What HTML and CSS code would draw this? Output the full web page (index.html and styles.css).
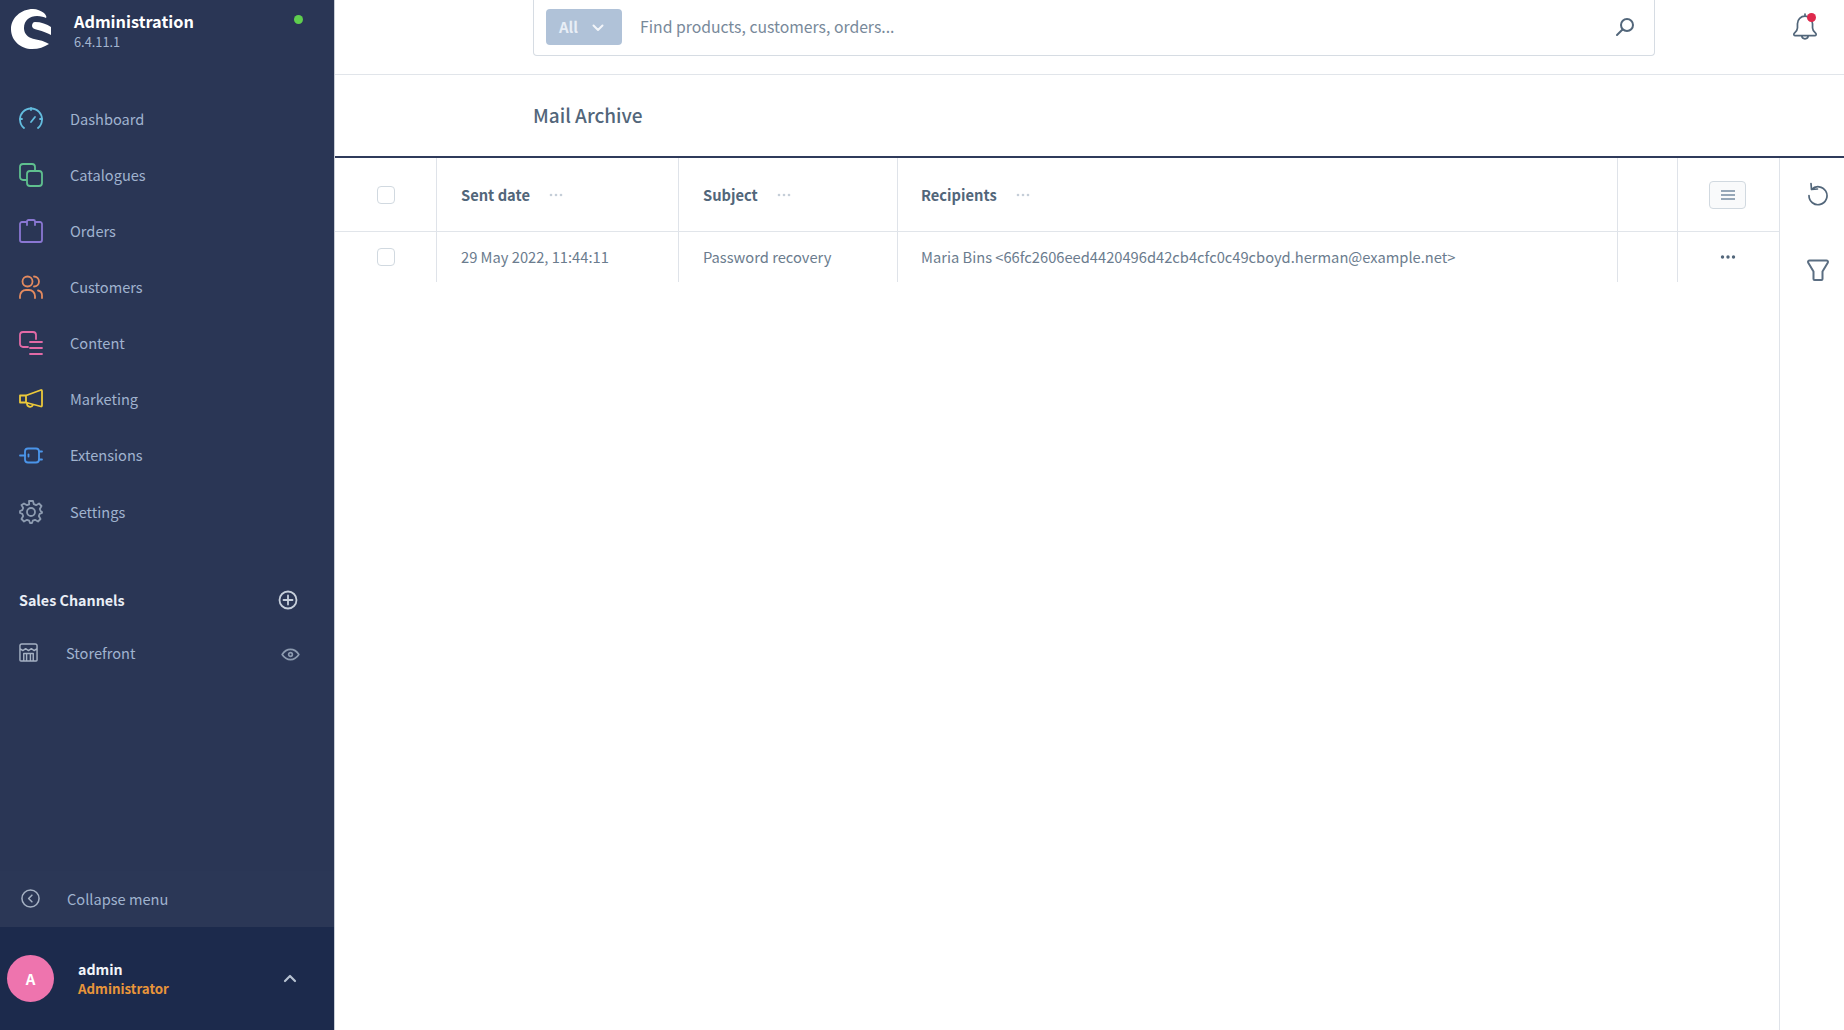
FILE: index.html
```html
<!DOCTYPE html>
<html lang="en">
<head>
<meta charset="utf-8">
<title>Mail Archive</title>
<link rel="stylesheet" href="styles.css">
</head>
<body>
<aside class="sidebar">
  <header class="brand">
    <svg class="logo" viewBox="0 0 41 41"><path fill="#fff" d="M22 0C10 0 0 9 0 20c0 12 10 20 21 20 7 0 12-2 17-5C32 31 25 31 20 29 15 27 13 23 13 19 13 11 19 7 26 7c4 0 7 1 9 2 1-1 0-3-2-5C30 2 26 0 22 0Z"/><path fill="#fff" d="M24 13c6 0 12 2 16 5v8c-4-2-8-4-13-5-4-1-6-2-6-4 0-2 1-4 3-4Z"/></svg>
    <div class="brand-text">
      <div class="brand-name">Administration</div>
      <div class="brand-version">6.4.11.1</div>
    </div>
    <span class="status-dot"></span>
  </header>
  <nav class="nav">
    <a class="nav-item"><svg class="nav-icon ic-blue" viewBox="0 0 24 24"><path d="M5 21A11 11 0 1 1 19 21"/><path d="M12 1v2M1 12h2M21 12h2M12 15l4-5"/></svg>Dashboard</a>
    <a class="nav-item"><svg class="nav-icon ic-green" viewBox="0 0 24 24"><path d="M7 17H4a3 3 0 0 1-3-3V4a3 3 0 0 1 3-3h9a3 3 0 0 1 3 3v3"/><rect x="8" y="8" width="15" height="15" rx="3"/></svg>Catalogues</a>
    <a class="nav-item"><svg class="nav-icon ic-purple" viewBox="0 0 24 24"><path d="M8 3H3a2 2 0 0 0-2 2v16a2 2 0 0 0 2 2h18a2 2 0 0 0 2-2V5a2 2 0 0 0-2-2h-5M8 6V2.500A1.500 1.500 0 0 1 9.500 1h5A1.500 1.500 0 0 1 16 2.500V6"/></svg>Orders</a>
    <a class="nav-item"><svg class="nav-icon ic-orange" viewBox="0 0 24 24"><circle cx="8.5" cy="6.5" r="5"/><path d="M1 23v-2a6 6 0 0 1 6-6h3a6 6 0 0 1 6 6v2M15 1.5a5 5 0 0 1 0 10M19 15.500a5 5 0 0 1 4 5V23"/></svg>Customers</a>
    <a class="nav-item"><svg class="nav-icon ic-pink" viewBox="0 0 24 24"><path d="M9 16H4a3 3 0 0 1-3-3V4a3 3 0 0 1 3-3h10a3 3 0 0 1 3 3v4M11 11h12M11 17h12M11 23h12"/></svg>Content</a>
    <a class="nav-item"><svg class="nav-icon ic-yellow" viewBox="0 0 24 24"><path d="M1 8.500h6l15-5.500a1 1 0 0 1 1 1v14.500a1 1 0 0 1-1 1L7 15.500H1ZM7 8.500v7M8 16a3.500 3.500 0 0 0 3 3.800 3 3 0 0 0 3-2"/></svg>Marketing</a>
    <a class="nav-item"><svg class="nav-icon ic-sky" viewBox="0 0 24 24"><rect x="6" y="5.500" width="14" height="14" rx="3"/><path d="M1 12.500h5M20 8.500h3M20 16.500h3"/><path d="M9.500 11.500v2"/></svg>Extensions</a>
    <a class="nav-item"><svg class="nav-icon ic-grey" viewBox="0 0 24 24"><circle cx="12" cy="12" r="4"/><path d="M10 1h4l.8 3.200 2.300 1 2.900-1.700L22.500 6l-1.700 3 .9 2.200L23 12v1l-2.300.8-.9 2.200 1.700 3-2.500 2.500-3-1.700-2.200.9L13 23h-2l-.8-2.300-2.200-.9-3 1.700L2.500 19l1.700-3-.9-2.200L1 13v-2l2.300-.8.9-2.200-1.700-3L5 3.500l3 1.700 2.200-.9Z"/></svg>Settings</a>
  </nav>
  <section class="channels">
    <div class="channels-head">
      <span>Sales Channels</span>
      <svg class="channels-add" viewBox="0 0 20 20"><circle cx="10" cy="10" r="8.5"/><path d="M10 5.500v9M5.500 10h9"/></svg>
    </div>
    <a class="channel">
      <svg class="channel-icon" viewBox="0 0 20 20"><path d="M3 1h14a2 2 0 0 1 2 2v15a1 1 0 0 1-1 1H2a1 1 0 0 1-1-1V3a2 2 0 0 1 2-2ZM1 6l3 2 3-2 3 2 3-2 3 2 3-2M5 19v-8h10v8M8 11v8M12 11v8"/></svg>
      <span class="channel-name">Storefront</span>
      <svg class="channel-eye" viewBox="0 0 20 14"><path d="M1 7c2.500-3.800 5.500-5.500 9-5.500S16.500 3.200 19 7c-2.500 3.800-5.500 5.500-9 5.500S3.500 10.800 1 7Z"/><circle cx="10" cy="7" r="2"/></svg>
    </a>
  </section>
  <a class="collapse">
    <svg class="collapse-icon" viewBox="0 0 20 20"><circle cx="10" cy="10" r="9"/><path d="M11.500 6.500 8 10l3.500 3.500"/></svg>
    Collapse menu
  </a>
  <footer class="user">
    <span class="avatar">A</span>
    <div class="user-text">
      <div class="user-name">admin</div>
      <div class="user-role">Administrator</div>
    </div>
    <svg class="user-chevron" viewBox="0 0 14 9"><path d="M2 7l5-5 5 5"/></svg>
  </footer>
</aside>
<main class="main">
  <div class="topbar">
    <div class="search">
      <span class="search-type">All<svg class="search-chevron" viewBox="0 0 12 8"><path d="M1.500 1.500 6 6l4.500-4.500"/></svg></span>
      <span class="search-placeholder">Find products, customers, orders...</span>
      <svg class="search-icon" viewBox="0 0 20 20"><circle cx="12" cy="8" r="6"/><path d="M7.500 12.500 2 18"/></svg>
    </div>
    <div class="bell">
      <svg class="bell-icon" viewBox="0 0 24 26"><path d="M12 3a7 7 0 0 0-7 7v4c0 2-1.200 3.500-3 5-.8.800-.3 2 1 2h18c1.300 0 1.800-1.200 1-2-1.800-1.500-3-3-3-5v-4a7 7 0 0 0-7-7ZM12 3V1M9 21a3 3 0 0 0 6 0"/></svg>
      <span class="bell-dot"></span>
    </div>
  </div>
  <div class="smartbar"><h1 class="title">Mail Archive</h1></div>
  <div class="content">
    <div class="grid-area">
      <div class="grid">
        <div class="cell head center"><span class="checkbox"></span></div>
        <div class="cell head"><b>Sent date</b><svg class="col-dots" viewBox="0 0 14 4"><circle cx="2" cy="2" r="1.300"/><circle cx="7" cy="2" r="1.300"/><circle cx="12" cy="2" r="1.300"/></svg></div>
        <div class="cell head"><b>Subject</b><svg class="col-dots" viewBox="0 0 14 4"><circle cx="2" cy="2" r="1.300"/><circle cx="7" cy="2" r="1.300"/><circle cx="12" cy="2" r="1.300"/></svg></div>
        <div class="cell head cell-wide"><b>Recipients</b><svg class="col-dots" viewBox="0 0 14 4"><circle cx="2" cy="2" r="1.300"/><circle cx="7" cy="2" r="1.300"/><circle cx="12" cy="2" r="1.300"/></svg></div>
        <div class="cell head"></div>
        <div class="cell head center last"><span class="settings-btn"><svg viewBox="0 0 14 12"><path d="M0 2h14M0 6h14M0 10h14"/></svg></span></div>
        <div class="cell center"><span class="checkbox"></span></div>
        <div class="cell">29 May 2022, 11:44:11</div>
        <div class="cell">Password recovery</div>
        <div class="cell cell-wide">Maria Bins &lt;66fc2606eed4420496d42cb4cfc0c49cboyd.herman@example.net&gt;</div>
        <div class="cell"></div>
        <div class="cell center last"><svg class="row-dots" viewBox="0 0 16 4"><circle cx="2.500" cy="2" r="1.700"/><circle cx="8" cy="2" r="1.700"/><circle cx="13.500" cy="2" r="1.700"/></svg></div>
      </div>
    </div>
    <div class="side-panel">
      <svg class="side-icon" viewBox="0 0 24 24"><path d="M5.500 7.500A9 9 0 1 1 3 13.500M5 1.500l.5 6 6-.5"/></svg>
      <svg class="side-icon funnel" viewBox="0 0 24 24"><path d="M3.500 2.500h17a1.500 1.500 0 0 1 1.400 2l-5.400 9V21a1 1 0 0 1-1 1h-7a1 1 0 0 1-1-1v-7.500l-5.400-9a1.500 1.500 0 0 1 1.400-2Z"/></svg>
    </div>
  </div>
</main>
</body>
</html>
```
FILE: styles.css
```css
* { box-sizing: border-box; }
html, body { height: 100%; }
body {
  margin: 0;
  display: flex;
  height: 1030px;
  overflow: hidden;
  background: #fff;
  font-family: "Noto Sans CJK SC", "Source Sans Pro", "Open Sans", sans-serif;
  font-size: 14.6px;
  color: #52667a;
}
svg { fill: none; stroke-linecap: round; stroke-linejoin: round; display: block; }

/* sidebar */
.sidebar {
  flex: 0 0 335px;
  display: flex;
  flex-direction: column;
  background: #2a3655;
  border-right: 1px solid #c9ced6;
  color: #a0b3cf;
}
.brand { height: 90.5px; flex: none; display: flex; align-items: flex-start; position: relative; padding: 9px 0 0 11px; }
.logo { width: 41px; height: 41px; }
.brand-text { margin-left: 22px; padding-top: 2px; }
.brand-name { font-weight: 700; font-size: 16.3px; line-height: 21px; color: #fff; }
.brand-version { font-size: 12.8px; line-height: 16px; margin-top: 2px; color: #a3b5d0; }
.status-dot { position: absolute; left: 294px; top: 15px; width: 9px; height: 9px; border-radius: 50%; background: #5fce4e; }

.nav { display: flex; flex-direction: column; }
.nav-item { height: 56.15px; display: flex; align-items: center; padding-left: 19px; gap: 27px; line-height: 20px; }
.nav-icon { width: 24px; height: 24px; stroke-width: 1.800; flex: none; }
.ic-blue { stroke: #63bcde; }
.ic-green { stroke: #5fc08f; }
.ic-purple { stroke: #8a77d3; }
.ic-orange { stroke: #e38a5f; }
.ic-pink { stroke: #e26aa6; }
.ic-yellow { stroke: #ecc93a; }
.ic-sky { stroke: #4b95ea; }
.ic-grey { stroke: #8d9bb0; }

.channels { margin-top: 46px; display: flex; flex-direction: column; }
.channels-head { height: 28px; display: flex; align-items: center; justify-content: space-between; padding: 0 36px 0 19px; font-weight: 700; font-size: 14.3px; color: #e9eef5; line-height: 20px; }
.channels-add { width: 20px; height: 20px; stroke: #c6cfdb; stroke-width: 1.800; }
.channel { height: 28px; margin-top: 25px; display: flex; align-items: center; padding-left: 19px; line-height: 20px; }
.channel-icon { width: 19px; height: 19px; stroke: #a5b1c3; stroke-width: 1.500; margin-top: -1px; }
.channel-name { margin-left: 28px; }
.channel-eye { width: 19px; height: 13px; stroke: #8d9bb0; stroke-width: 1.800; margin-left: auto; margin-right: 34px; margin-top: 3px; }

.collapse { margin-top: auto; height: 56px; display: flex; align-items: center; padding: 0 0 1px 21px; gap: 27px; line-height: 20px; background: #2b3756; }
.collapse-icon { width: 19px; height: 19px; stroke: #a5b1c3; stroke-width: 1.600; flex: none; }

.user { height: 103px; display: flex; align-items: center; padding: 0 0 0 7px; background: #1c2a4c; }
.avatar { width: 47px; height: 47px; border-radius: 50%; background: #ee74ae; color: #fff; font-weight: 700; font-size: 15px; display: flex; align-items: center; justify-content: center; flex: none; }
.user-text { margin-left: 24px; }
.user-name { color: #f2f5f9; font-weight: 700; font-size: 14.2px; line-height: 20px; }
.user-role { color: #e8953a; font-weight: 700; font-size: 13.3px; line-height: 20px; }
.user-chevron { width: 14px; height: 9px; stroke: #b7c2d2; stroke-width: 2.200; margin-left: auto; margin-right: 37px; }

/* main */
.main { flex: 1; min-width: 0; display: flex; flex-direction: column; }
.topbar { height: 75px; flex: none; display: flex; padding-left: 198px; border-bottom: 1px solid #e1e5ea; position: relative; }
.search { width: 1122px; height: 56px; display: flex; align-items: center; padding: 0 19px 0 12px; background: #fff; border: 1px solid #d6dce3; border-top: 0; border-radius: 0 0 4px 4px; }
.search-type { width: 76px; height: 36px; margin-top: -1px; flex: none; display: flex; align-items: center; padding-left: 13px; border-radius: 4px; background: #b0c2d8; color: #e8eef6; font-weight: 700; font-size: 15px; line-height: 20px; }
.search-chevron { width: 12px; height: 8px; stroke: #f2f5f9; stroke-width: 2; margin-left: 14px; margin-top: 2px; }
.search-placeholder { margin: -1px 0 0 18px; color: #78899a; font-size: 15.75px; line-height: 22px; }
.search-icon { width: 20px; height: 20px; stroke: #52667a; stroke-width: 2; margin-left: auto; margin-top: -2px; }
.bell { width: 28px; height: 30px; position: relative; margin: 13px 0 0 137px; }
.bell-icon { width: 26px; height: 28px; stroke: #52667a; stroke-width: 1.600; }
.bell-dot { position: absolute; left: 15px; top: 0; width: 9px; height: 9px; border-radius: 50%; background: #de294c; }
.smartbar { height: 83px; flex: none; padding: 0 0 1px 198px; display: flex; align-items: center; border-bottom: 2px solid #2f3b5b; }
.title { margin: 0; font-size: 19px; font-weight: 500; color: #52667a; line-height: 28px; }
.content { flex: 1; display: flex; min-height: 0; }
.grid-area { width: 1445px; flex: none; border-right: 1px solid #dfe3e9; }
.grid { display: grid; grid-template-columns: 102px 242px 219px 720px 60px 1fr; grid-template-rows: 74px 50px; }
.cell { display: flex; align-items: center; padding-left: 24px; border-right: 1px solid #dfe3e9; color: #6b7c8e; font-size: 14.7px; line-height: 20px; white-space: nowrap; }
.cell.head { border-bottom: 1px solid #e1e5ea; color: #52667a; }
.cell.cell-wide { padding-left: 23px; }
.cell.last { border-right: 0; }
.cell.center { justify-content: center; padding-left: 0; }
.checkbox { width: 18px; height: 18px; border: 1px solid #d1d9e0; border-radius: 4px; background: #fff; }
.col-dots { width: 14px; height: 4px; fill: #c5ced8; margin-left: 19px; margin-top: 1px; }
.settings-btn { width: 37px; height: 28px; margin-right: 2px; border: 1px solid #d1d9e0; border-radius: 4px; background: #f9fafb; display: flex; align-items: center; justify-content: center; }
.settings-btn svg { width: 14px; height: 12px; stroke: #758ca3; stroke-width: 1.600; }
.row-dots { width: 16px; height: 4px; fill: #52667a; margin-right: 2px; }
.side-panel { flex: 1; display: flex; flex-direction: column; align-items: center; padding-top: 24px; padding-left: 11px; gap: 52px; }
.side-icon { width: 24px; height: 24px; stroke: #52667a; stroke-width: 1.700; }
.funnel { stroke: #5b6e82; stroke-width: 2; }
```
